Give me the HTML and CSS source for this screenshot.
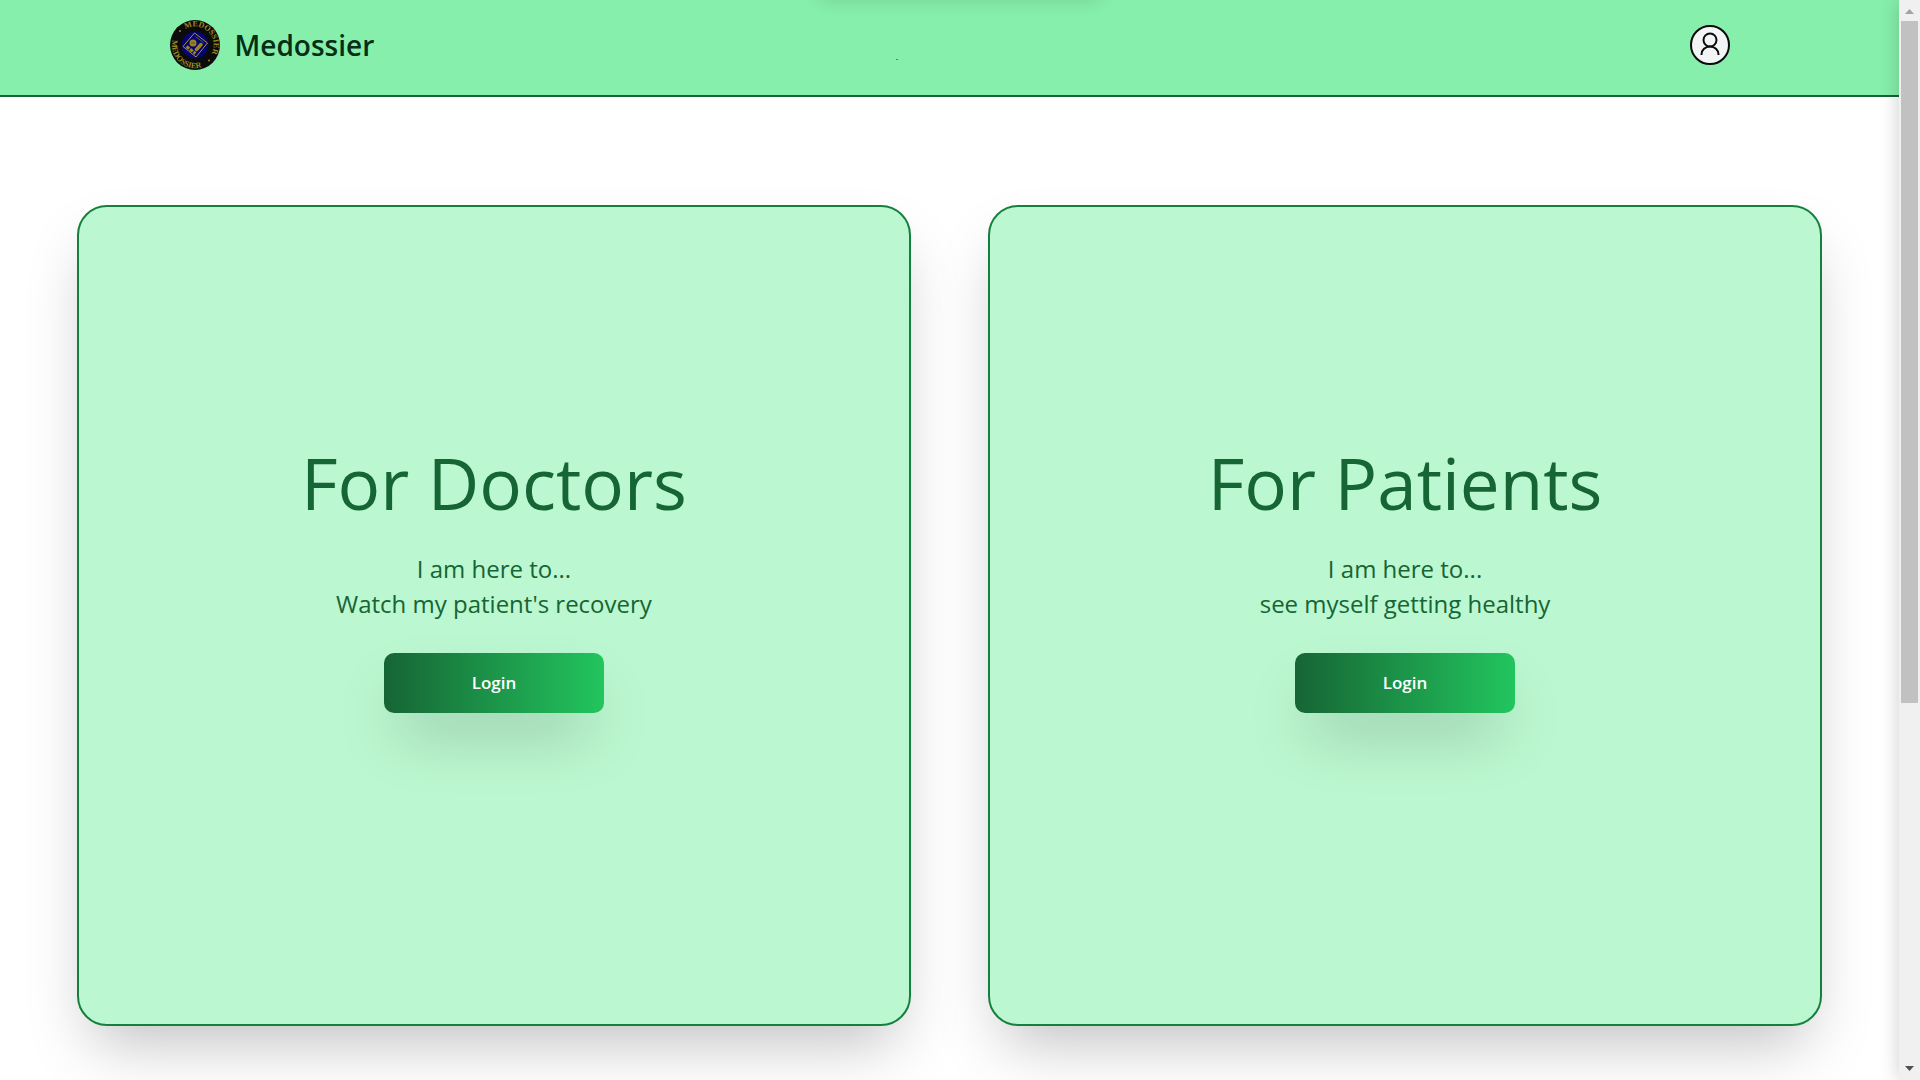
FILE: index.html
```html
<!DOCTYPE html>
<html lang="en">
<head>
  <meta charset="utf-8">
  <meta name="viewport" content="width=device-width, initial-scale=1">
  <title>Medossier</title>
  <link rel="stylesheet" href="styles.css">
</head>
<body>
  <div class="window">
    <div class="page">
      <header class="header">
        <div class="header-inner">
          <a class="brand" href="#">
            <svg class="brand-logo" viewBox="0 0 100 100" aria-hidden="true">
              <defs>
                <path id="arc-top" d="M31 18A37 37 0 1 1 69 82"/>
                <path id="arc-bottom" d="M5 40A46 46 0 0 0 80 85"/>
              </defs>
              <circle cx="50" cy="50" r="50" fill="#0b0b0b"/>
              <circle cx="50" cy="50" r="27" fill="#06066c"/>
              <g class="logo-text">
                <text font-size="16"><textPath href="#arc-top">MEDOSSIER</textPath></text>
                <text font-size="16"><textPath href="#arc-bottom">MEDOSSIER</textPath></text>
              </g>
              <circle cx="20" cy="22" r="2" fill="#9b8b24"/>
              <circle cx="78" cy="81" r="2" fill="#9b8b24"/>
              <path d="M49 26L75 46L52 74L26 53Z" fill="none" stroke="#a08d58" stroke-width="2"/>
              <circle cx="46" cy="46" r="7" fill="#9b8420"/>
              <path d="M33 53L51 67" stroke="#9b8420" stroke-width="6" stroke-dasharray="7 2"/>
              <path d="M53 59L62 49" stroke="#9b8420" stroke-width="7" stroke-linecap="round"/>
              <path d="M51 33L67 45M42 46h8" stroke="#5f5638" stroke-width="2"/>
            </svg>
            <span class="brand-name">Medossier</span>
          </a>
          <button class="avatar" type="button" aria-label="Account">
            <svg viewBox="0 0 40 40" aria-hidden="true">
              <circle cx="20" cy="20" r="19" fill="#f3f4f6" stroke="#0a0a0a" stroke-width="2"/>
              <g fill="none" stroke="#0a0a0a" stroke-width="2">
                <circle cx="20" cy="15" r="6.500"/>
                <path d="M11.500 30V29.500A8.500 8 0 0 1 28.500 29.500V30"/>
              </g>
            </svg>
          </button>
        </div>
        <span class="speck" aria-hidden="true"></span>
      </header>
      <main class="cards">
        <section class="card">
          <h1 class="card-title">For Doctors</h1>
          <p class="card-text">I am here to...<br>Watch my patient's recovery</p>
          <button class="login" type="button">Login</button>
        </section>
        <section class="card">
          <h1 class="card-title">For Patients</h1>
          <p class="card-text">I am here to...<br>see myself getting healthy</p>
          <button class="login" type="button">Login</button>
        </section>
      </main>
    </div>
    <div class="scrollbar" aria-hidden="true">
      <svg class="scroll-arrow" viewBox="0 0 9 5"><path d="M0 5L4.500 0L9 5Z" fill="#a3a3a3"/></svg>
      <div class="scroll-track"><div class="scroll-thumb"></div></div>
      <svg class="scroll-arrow" viewBox="0 0 9 5"><path d="M0 0L4.500 5L9 0Z" fill="#505050"/></svg>
    </div>
  </div>
</body>
</html>
```
FILE: styles.css
```css
* {
  box-sizing: border-box;
}

body {
  margin: 0;
  background: #fff;
  color: #166534;
  font-family: "Segoe UI", "Open Sans", "Noto Sans", sans-serif;
}

.window {
  display: grid;
  grid-template-columns: 1fr 21px;
  min-height: 100vh;
  overflow: hidden;
}

.page {
  min-width: 0;
}

.header {
  position: relative;
  padding: 20px 24px 25px;
  border-bottom: 2px solid #166534;
  background: #86efac;
}

/* soft shade hanging from the top edge of the window */
.header::before {
  content: "";
  position: absolute;
  top: -22px;
  left: 50%;
  width: 280px;
  height: 20px;
  margin-left: -130px;
  box-shadow: 0 0 20px rgba(0, 0, 0, 0.16);
}

.header-inner {
  display: flex;
  align-items: center;
  justify-content: space-between;
  max-width: 1560px;
  margin: 0 auto;
}

.brand {
  display: flex;
  align-items: center;
  gap: 15px;
  color: #052e16;
  text-decoration: none;
}

.brand-logo {
  width: 50px;
  height: 50px;
}

.logo-text {
  fill: #9b8b24;
  font-family: "Liberation Serif", serif;
  font-weight: 700;
}

.brand-name {
  font-size: 28px;
  font-weight: 600;
  line-height: 50px;
}

.avatar {
  width: 40px;
  height: 40px;
  padding: 0;
  border: 0;
  border-radius: 50%;
  background: none;
}

.avatar svg {
  display: block;
}

.speck {
  position: absolute;
  top: 59px;
  left: 47.2%;
  width: 2px;
  height: 1px;
  background: #b45a4a;
}

.cards {
  display: grid;
  grid-template-columns: 1fr 1fr;
  gap: 4vw;
  padding: 10vh 4vw 5vh;
}

.card {
  display: flex;
  flex-direction: column;
  align-items: center;
  justify-content: center;
  min-height: 76vh;
  padding-bottom: 75px;
  border: 2px solid #15803d;
  border-radius: 30px;
  background: #bbf7d0;
  box-shadow: 0 31px 62px -15px rgba(0, 0, 0, 0.25);
  text-align: center;
}

.card-title {
  margin: 0 0 28px;
  font-size: 71px;
  font-weight: 400;
  line-height: 80px;
}

.card-text {
  margin: 0 0 32px;
  font-size: 24px;
  line-height: 35px;
}

.login {
  width: 220px;
  height: 60px;
  border: 0;
  border-radius: 10px;
  background: linear-gradient(to right, #166534, #22c55e);
  box-shadow: 0 31px 62px -15px rgba(0, 0, 0, 0.25);
  color: #fff;
  font-family: inherit;
  font-size: 17px;
  font-weight: 600;
}

.scrollbar {
  position: relative;
  display: flex;
  flex-direction: column;
  align-items: center;
  justify-content: space-between;
  padding: 9px 2px;
  background: #f0f0f0;
  box-shadow: 0 0 20px rgba(0, 0, 0, 0.2);
}

.scroll-arrow {
  width: 9px;
  height: 5px;
}

.scroll-track {
  flex: 1;
  align-self: stretch;
  margin: 7px 0;
}

.scroll-thumb {
  height: 65.7%;
  background: #c1c1c1;
}
```
